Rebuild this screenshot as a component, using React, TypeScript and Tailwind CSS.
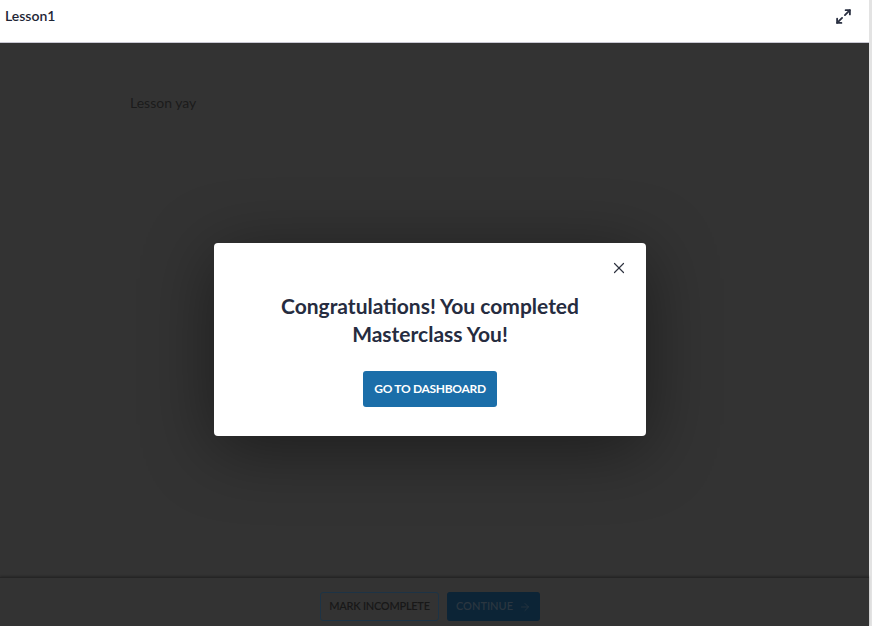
import React from 'react';
import { Maximize2, X, ArrowRight } from 'lucide-react';

const font = "font-['Lato','Noto_Sans',sans-serif]";

const App = () => {
  return (
    <div className={`h-[626px] w-[872px] flex overflow-hidden bg-white ${font}`}>
      <div className="flex-1 flex flex-col min-w-0">
        <header className="h-[43px] shrink-0 flex items-start justify-between pl-[5px] pr-[17px] bg-white border-b border-[#c9c8d3]">
          <span className="mt-[6px] text-[14px] leading-[20px] font-semibold text-[#1e2535]">Lesson1</span>
          <Maximize2 className="mt-[8px] w-[17px] h-[17px] text-[#2a3042]" strokeWidth={2.6} />
        </header>

        <div className="relative flex-1 flex flex-col bg-[#333333]">
          <main className="flex-1 pl-[130px] pt-[49px]">
            <p className="text-[14px] text-[#1b1b1b]">Lesson yay</p>
          </main>
          <footer className="h-[49px] shrink-0 border-t border-[#252525] shadow-[0_-1px_2px_rgba(0,0,0,0.25)] flex justify-center gap-[8px] pt-[14px] pr-[9px]">
            <button className="h-[29px] w-[119px] rounded-[3px] border border-[#1d3345] text-[11px] font-semibold text-[#181818] tracking-tight">
              MARK INCOMPLETE
            </button>
            <button className="h-[29px] w-[93px] rounded-[3px] bg-[#0c2436] text-[11px] font-semibold text-[#2a3640] flex items-center justify-center gap-[6px]">
              CONTINUE
              <ArrowRight className="w-[12px] h-[12px]" strokeWidth={1.6} />
            </button>
          </footer>

          <div className="absolute inset-0 flex items-center justify-center">
            <div className="relative mt-[10px] mr-[9px] w-[432px] h-[193px] bg-white rounded-[4px] shadow-[0_12px_70px_rgba(0,0,0,0.45)] flex flex-col items-center pt-[49px]">
              <button className="absolute top-[16px] right-[18px] text-[#2f3340]">
                <X className="w-[18px] h-[18px]" strokeWidth={1.6} />
              </button>
              <h2 className="text-center text-[21px] leading-[28px] font-bold text-[#262c40]">
                Congratulations! You completed
                <br />
                Masterclass You!
              </h2>
              <button className="mt-[23px] h-[36px] w-[134px] rounded-[3px] bg-[#1b6ea9] text-white text-[12px] font-bold tracking-tight">
                GO TO DASHBOARD
              </button>
            </div>
          </div>
        </div>
      </div>
      <div className="w-[3px] shrink-0 bg-[#e3e3e3]" />
    </div>
  );
};

export default App;
